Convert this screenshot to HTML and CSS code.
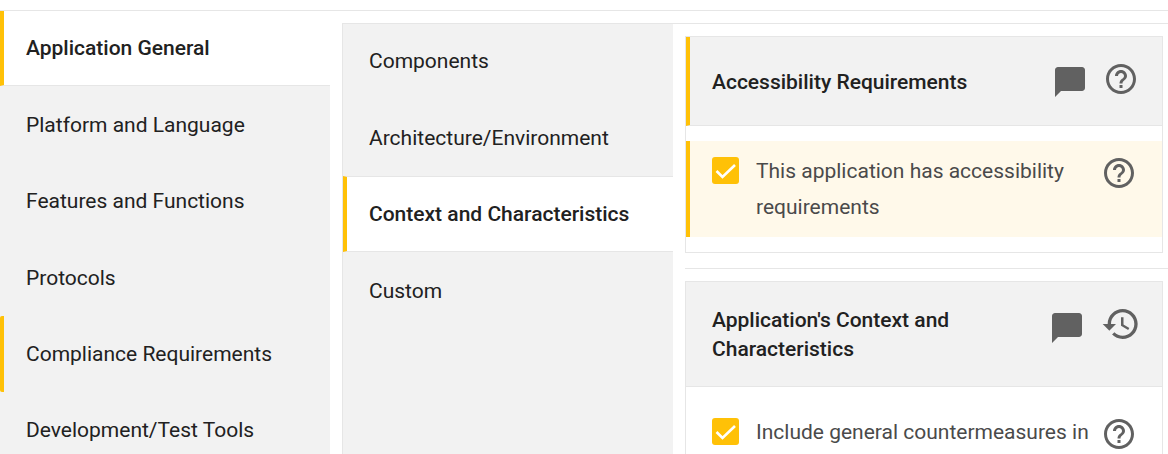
FILE: index.html
```html
<!DOCTYPE html>
<html lang="en">
<head>
<meta charset="utf-8">
<title>Application Profile</title>
<link rel="stylesheet" href="styles.css">
</head>
<body>
<div class="topbar"></div>
<div class="layout">
  <nav class="col-main">
    <div class="nav-item active">Application General</div>
    <div class="nav-item">Platform and Language</div>
    <div class="nav-item">Features and Functions</div>
    <div class="nav-item">Protocols</div>
    <div class="nav-item marked">Compliance Requirements</div>
    <div class="nav-item">Development/Test Tools</div>
  </nav>
  <nav class="col-sub">
    <div class="nav-item">Components</div>
    <div class="nav-item">Architecture/Environment</div>
    <div class="nav-item active both">Context and Characteristics</div>
    <div class="nav-item">Custom</div>
  </nav>
  <main class="content">
    <section class="card first">
      <header class="card-head marked-head">
        <h2 class="card-title">Accessibility Requirements</h2>
        <svg class="icon chat" viewBox="0 0 24 24"><path d="M20 2H4c-1.1 0-2 .9-2 2v18l4-4h14c1.1 0 2-.9 2-2V4c0-1.1-.9-2-2-2z"/></svg>
        <svg class="icon help-head" viewBox="0 0 24 24"><path d="M11 18h2v-2h-2v2zm1-16C6.48 2 2 6.48 2 12s4.48 10 10 10 10-4.48 10-10S17.52 2 12 2zm0 18c-4.41 0-8-3.59-8-8s3.59-8 8-8 8 3.59 8 8-3.59 8-8 8zm0-14c-2.21 0-4 1.79-4 4h2c0-1.1.9-2 2-2s2 .9 2 2c0 2-3 1.75-3 5h2c0-2.25 3-2.5 3-5 0-2.21-1.79-4-4-4z"/></svg>
      </header>
      <div class="card-body">
        <div class="option selected">
          <span class="checkbox"><svg viewBox="0 0 27 27"><path d="M4.5 14l6 6L23 8" /></svg></span>
          <span class="option-text">This application has accessibility requirements</span>
          <svg class="icon help" viewBox="0 0 24 24"><path d="M11 18h2v-2h-2v2zm1-16C6.48 2 2 6.48 2 12s4.48 10 10 10 10-4.48 10-10S17.52 2 12 2zm0 18c-4.41 0-8-3.59-8-8s3.59-8 8-8 8 3.59 8 8-3.59 8-8 8zm0-14c-2.21 0-4 1.79-4 4h2c0-1.1.9-2 2-2s2 .9 2 2c0 2-3 1.75-3 5h2c0-2.25 3-2.5 3-5 0-2.21-1.79-4-4-4z"/></svg>
        </div>
      </div>
    </section>
    <hr class="divider">
    <section class="card">
      <header class="card-head tall">
        <h2 class="card-title">Application's Context and Characteristics</h2>
        <svg class="icon chat" viewBox="0 0 24 24"><path d="M20 2H4c-1.1 0-2 .9-2 2v18l4-4h14c1.1 0 2-.9 2-2V4c0-1.1-.9-2-2-2z"/></svg>
        <svg class="icon history" viewBox="0 0 24 24"><path d="M13 3c-4.97 0-9 4.03-9 9H1l3.89 3.89.07.14L9 12H6c0-3.87 3.13-7 7-7s7 3.13 7 7-3.13 7-7 7c-1.93 0-3.68-.79-4.94-2.06l-1.42 1.42C8.27 19.99 10.51 21 13 21c4.97 0 9-4.03 9-9s-4.03-9-9-9zm-1 5v5l4.28 2.54.72-1.21-3.5-2.08V8H12z"/></svg>
      </header>
      <div class="card-body">
        <div class="option">
          <span class="checkbox"><svg viewBox="0 0 27 27"><path d="M4.5 14l6 6L23 8" /></svg></span>
          <span class="option-text">Include general countermeasures in</span>
          <svg class="icon help" viewBox="0 0 24 24"><path d="M11 18h2v-2h-2v2zm1-16C6.48 2 2 6.48 2 12s4.48 10 10 10 10-4.48 10-10S17.52 2 12 2zm0 18c-4.41 0-8-3.59-8-8s3.59-8 8-8 8 3.59 8 8-3.59 8-8 8zm0-14c-2.21 0-4 1.79-4 4h2c0-1.1.9-2 2-2s2 .9 2 2c0 2-3 1.75-3 5h2c0-2.25 3-2.5 3-5 0-2.21-1.79-4-4-4z"/></svg>
        </div>
      </div>
    </section>
  </main>
</div>
</body>
</html>
```

FILE: styles.css
```css
* { box-sizing: border-box; }
html, body { margin: 0; height: 454px; overflow: hidden; background: #fff; }
body { font-family: Roboto, "Liberation Sans", sans-serif; font-size: 21px; color: #212121; }

.topbar { position: relative; z-index: 1; height: 11px; border-bottom: 1px solid #e6e6e6; }
.layout { display: flex; height: 444px; margin-top: -1px; overflow: hidden; }

.col-main { width: 330px; margin-right: 12px; background: #f2f2f2; flex: none; }
.col-sub { width: 331px; margin-top: 13px; background: #f2f2f2; border-top: 1px solid #e6e6e6; border-left: 1px solid #e6e6e6; flex: none; }
.col-sub .nav-item:first-child { margin-top: -1px; }

.nav-item {
  height: 76.4px;
  display: flex;
  align-items: center;
  padding-left: 26px;
  white-space: nowrap;
}
.nav-item:nth-child(4) { padding-top: 1px; }
.nav-item.active {
  background: #fff;
  font-weight: 500;
  border-left: 4px solid #ffc107;
  border-bottom: 1px solid #e6e6e6;
  padding-left: 22px;
}
.nav-item.both { border-top: 1px solid #e6e6e6; }
.nav-item.marked { border-left: 4px solid #ffc107; padding-left: 22px; border-radius: 2px 0 0 2px; }

.content { flex: 1; margin-top: 13px; border-top: 1px solid #e6e6e6; padding: 12px 0 0 12px; min-width: 0; }

.card { width: 478px; border: 1px solid #e6e6e6; }
.card-head {
  position: relative;
  height: 89px;
  background: #f2f2f2;
  border-bottom: 1px solid #e6e6e6;
  display: flex;
  align-items: center;
  padding-left: 26px;
  padding-top: 2px;
}
.marked-head { border-left: 4px solid #ffc107; padding-left: 22px; }
.card-head.tall { height: 105px; align-items: flex-start; padding-top: 24px; }
.card-title { margin: 0; font-size: 21px; font-weight: 500; line-height: 29px; width: 290px; }

.divider { border: 0; border-top: 1px solid #e6e6e6; margin: 15px 0 12px; height: 0; }

.icon { fill: #616161; display: block; flex: none; }
.chat { position: absolute; width: 36px; height: 36px; left: 366px; top: 27px; }
.marked-head .chat { left: 362px; }
.help-head { position: absolute; width: 36px; height: 36px; left: 413px; top: 24px; }
.history { position: absolute; width: 40px; height: 40px; left: 415px; top: 22px; }
.tall .chat { top: 28px; left: 363px; }

.card-body { padding: 15px 0; }
.option {
  display: flex;
  align-items: flex-start;
  padding: 12px 0 12px 22px;
  min-height: 96px;
  border-left: 4px solid transparent;
  color: #4a4a4a;
  line-height: 36px;
}
.option.selected { background: #fff9ea; border-left-color: #ffc107; }
.checkbox {
  width: 27px;
  height: 27px;
  margin-top: 4px;
  margin-right: 17px;
  background: #ffc107;
  border-radius: 3px;
  flex: none;
}
.checkbox svg { display: block; width: 27px; height: 27px; fill: none; stroke: #fff; stroke-width: 2.6; }
.option-text { width: 345px; flex: none; }
.help { width: 36px; height: 36px; margin-top: 2px; }
```
